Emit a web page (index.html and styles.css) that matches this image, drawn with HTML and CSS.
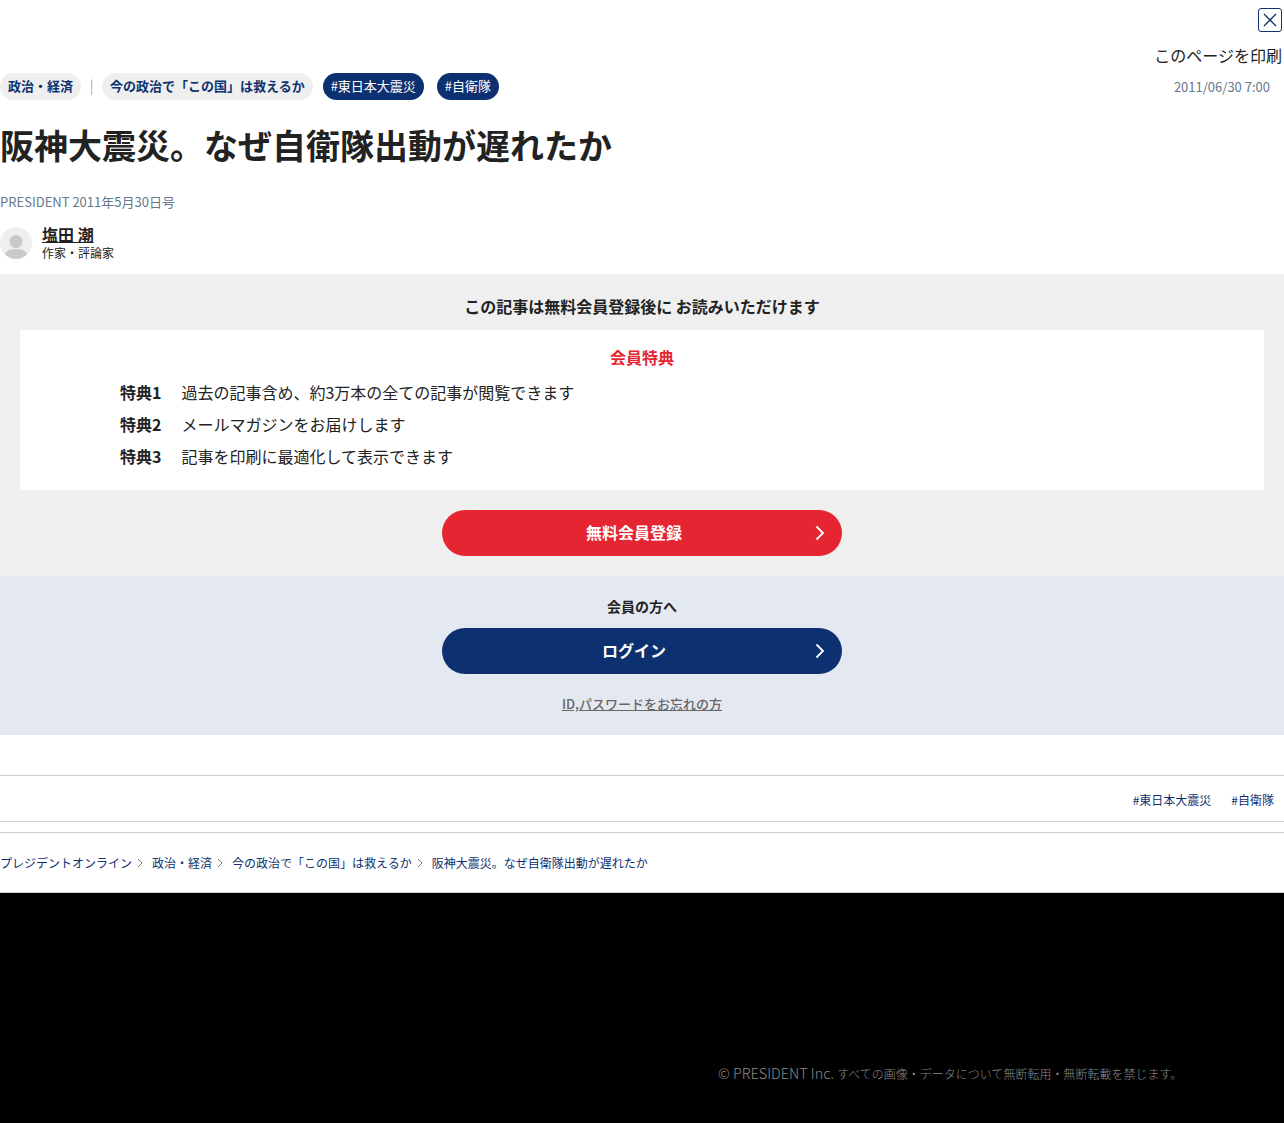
FILE: index.html
```html
<!DOCTYPE html>
<html lang="ja">
<head>
<meta charset="utf-8">
<title>阪神大震災。なぜ自衛隊出動が遅れたか</title>
<link rel="stylesheet" href="styles.css">
</head>
<body>
<header class="top">
  <button class="close" aria-label="閉じる"><svg width="14" height="14" viewBox="0 0 14 14"><path d="M1 1l12 12M13 1L1 13" fill="none" stroke="#0d3170" stroke-width="1.3"/></svg></button>
  <a class="print">このページを印刷</a>
</header>
<div class="meta">
  <div class="tags">
    <a class="pill pill-light">政治・経済</a>
    <span class="sep">|</span>
    <a class="pill pill-light pill-series">今の政治で「この国」は救えるか</a>
    <a class="pill pill-dark">#東日本大震災</a>
    <a class="pill pill-dark">#自衛隊</a>
  </div>
  <time class="date">2011/06/30 7:00</time>
</div>
<h1 class="title">阪神大震災。なぜ自衛隊出動が遅れたか</h1>
<p class="issue">PRESIDENT 2011年5月30日号</p>
<div class="author">
  <svg class="avatar" width="32" height="32" viewBox="0 0 32 32"><defs><clipPath id="av"><circle cx="16" cy="16" r="16"/></clipPath></defs><circle cx="16" cy="16" r="16" fill="#efefef"/><g clip-path="url(#av)" fill="#c9c9c9"><circle cx="16" cy="14.5" r="6.5"/><ellipse cx="16" cy="27" rx="11" ry="5"/></g></svg>
  <div class="author-text">
    <a class="author-name">塩田 潮</a>
    <span class="author-role">作家・評論家</span>
  </div>
</div>
<section class="register">
  <h2 class="register-head">この記事は無料会員登録後に お読みいただけます</h2>
  <div class="benefits">
    <h3 class="benefits-head">会員特典</h3>
    <ul class="benefit-list">
      <li><b>特典1</b><span>過去の記事含め、約3万本の全ての記事が閲覧できます</span></li>
      <li><b>特典2</b><span>メールマガジンをお届けします</span></li>
      <li><b>特典3</b><span>記事を印刷に最適化して表示できます</span></li>
    </ul>
  </div>
  <a class="cta cta-red">無料会員登録<svg class="chev" width="10" height="16" viewBox="0 0 10 16"><path d="M1.5 1.5L8 8l-6.500 6.500" fill="none" stroke="#fff" stroke-width="1.800"/></svg></a>
</section>
<section class="login">
  <h2 class="login-head">会員の方へ</h2>
  <a class="cta cta-navy">ログイン<svg class="chev" width="10" height="16" viewBox="0 0 10 16"><path d="M1.5 1.5L8 8l-6.500 6.500" fill="none" stroke="#fff" stroke-width="1.800"/></svg></a>
  <a class="forgot">ID,パスワードをお忘れの方</a>
</section>
<div class="foot-tags"><a>#東日本大震災</a><a>#自衛隊</a></div>
<nav class="crumbs">
  <a>プレジデントオンライン</a><svg class="crumb-chev" width="6" height="10" viewBox="0 0 6 10"><path d="M1 1l4 4-4 4" fill="none" stroke="#777" stroke-width="1"/></svg>
  <a>政治・経済</a><svg class="crumb-chev" width="6" height="10" viewBox="0 0 6 10"><path d="M1 1l4 4-4 4" fill="none" stroke="#777" stroke-width="1"/></svg>
  <a>今の政治で「この国」は救えるか</a><svg class="crumb-chev" width="6" height="10" viewBox="0 0 6 10"><path d="M1 1l4 4-4 4" fill="none" stroke="#777" stroke-width="1"/></svg>
  <a>阪神大震災。なぜ自衛隊出動が遅れたか</a>
</nav>
<footer class="footer"><p class="copy">© PRESIDENT Inc. <small>すべての画像・データについて無断転用・無断転載を禁じます。</small></p></footer>
</body>
</html>
```
FILE: styles.css
```css
* { box-sizing: border-box; }
html, body { margin: 0; padding: 0; }
body {
  font-family: "Noto Sans CJK JP", "Noto Sans", sans-serif;
  color: #222;
  background: #fff;
  height: 1123px;
  overflow: hidden;
}
h1, h2, h3, p, ul { margin: 0; padding: 0; }
.top {
  display: flex;
  flex-direction: column;
  align-items: flex-end;
  padding: 8px 2px 0 0;
}
.close {
  width: 24px;
  height: 24px;
  padding: 0;
  display: flex;
  align-items: center;
  justify-content: center;
  background: #fff;
  border: 1px solid #0d3170;
  border-radius: 3px;
}
.print {
  margin-top: 11px;
  font-size: 16px;
  line-height: 24px;
  color: #222;
}
.meta {
  display: flex;
  justify-content: space-between;
  align-items: center;
  height: 27px;
  margin-top: 6px;
  padding-right: 14px;
}
.tags { display: flex; align-items: center; }
.pill {
  display: block;
  height: 27px;
  line-height: 25px;
  padding: 0 8px;
  border-radius: 14px;
  font-size: 13px;
}
.pill-light { background: #efefef; color: #0d3170; font-weight: 700; }
.pill-dark { background: #0d3170; color: #fff; margin-left: 13px; }
.pill-series { margin-left: 0; }
.pill-series + .pill-dark { margin-left: 10px; }
.sep { width: 21px; height: 25px; line-height: 25px; align-self: flex-start; text-align: center; font-size: 14px; color: #888; font-weight: 300; }
.date { font-size: 13px; color: #66788a; }
.title {
  margin-top: 21px;
  font-size: 34px;
  line-height: 48px;
  font-weight: 700;
  color: #222;
}
.issue {
  margin-top: 23px;
  font-size: 13px;
  line-height: 20px;
  color: #66788a;
}
.author { display: flex; align-items: center; gap: 10px; margin-top: 15px; height: 32px; }
.avatar { display: block; flex: none; }
.author-text { display: flex; flex-direction: column; }
.author-name { font-size: 16px; line-height: 18px; font-weight: 700; text-decoration: underline; }
.author-role { font-size: 12px; line-height: 18px; color: #222; margin-top: 1px; }
.register {
  margin-top: 15px;
  height: 302px;
  padding: 20px 20px 0;
  background: #efefef;
  display: flex;
  flex-direction: column;
  align-items: center;
}
.register-head { font-size: 16px; line-height: 24px; font-weight: 700; text-align: center; height: 36px; }
.benefits { width: 100%; height: 160px; background: #fff; padding: 15px 100px 0; }
.benefits-head { font-size: 16px; line-height: 24px; font-weight: 700; color: #e52632; text-align: center; }
.benefit-list { list-style: none; margin-top: 7px; }
.benefit-list li { display: flex; gap: 20px; font-size: 16px; line-height: 32px; }
.benefit-list b { font-weight: 700; }
.cta {
  position: relative;
  display: block;
  width: 400px;
  height: 46px;
  margin-top: 20px;
  padding-right: 16px;
  border-radius: 23px;
  color: #fff;
  font-size: 16px;
  line-height: 45px;
  font-weight: 700;
  text-align: center;
}
.cta-red { background: #e52632; }
.cta-navy { background: #0d3170; margin-top: 10px; }
.chev { position: absolute; right: 17px; top: 15px; }
.login {
  height: 159px;
  padding-top: 18px;
  background: #e4e8f0;
  display: flex;
  flex-direction: column;
  align-items: center;
}
.login-head { font-size: 14px; line-height: 24px; font-weight: 700; }
.forgot {
  margin-top: 20px;
  font-size: 13px;
  line-height: 20px;
  font-weight: 500;
  color: #666;
  text-decoration: underline;
}
.foot-tags {
  margin-top: 40px;
  height: 47px;
  padding-top: 2px;
  border-top: 1px solid #ccc;
  border-bottom: 1px solid #ccc;
  display: flex;
  justify-content: flex-end;
  align-items: center;
  gap: 20px;
  padding-right: 10px;
  font-size: 12px;
  color: #0d3170;
}
.crumbs {
  margin-top: 10px;
  height: 61px;
  border-top: 1px solid #ccc;
  border-bottom: 1px solid #ccc;
  display: flex;
  align-items: center;
  font-size: 12px;
  color: #0d3170;
}
.crumb-chev { margin: 0 9px 0 5px; flex: none; }
.footer { height: 230px; background: #000; padding: 170px 0 0 718px; }
.copy { font-size: 14.4px; line-height: 20px; color: #8a8a8a; font-weight: 300; }
.copy small { font-size: 12px; }
```
